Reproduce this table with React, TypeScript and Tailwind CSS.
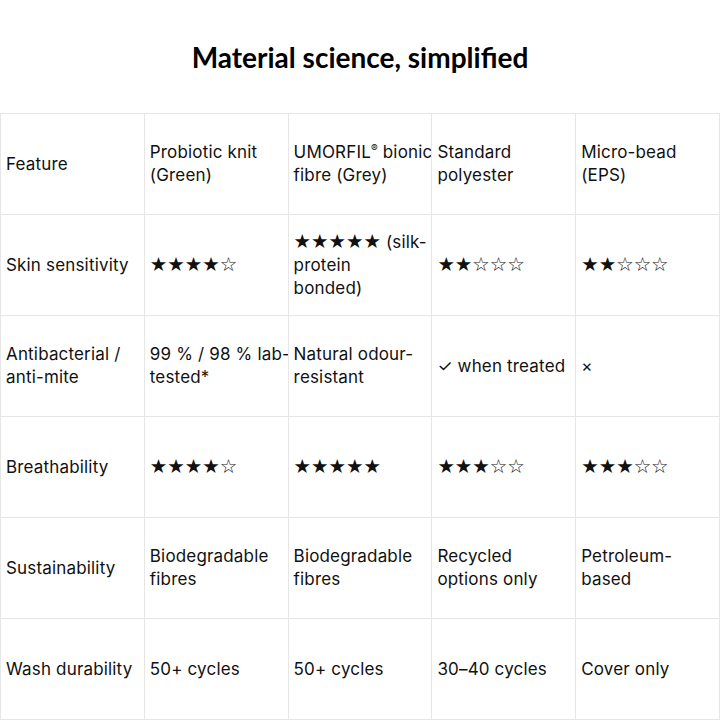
import type { ReactNode } from "react";

type Cell = ReactNode[] | { stars: number; extra?: string[] };

const headers: Cell[] = [
  ["Feature"],
  ["Probiotic knit", "(Green)"],
  [
    <>
      UMORFIL<sup className="text-[10px] relative -top-[6px]">®</sup> bionic
    </>,
    "fibre (Grey)",
  ],
  ["Standard", "polyester"],
  ["Micro-bead", "(EPS)"],
];

const rows: Cell[][] = [
  [
    ["Skin sensitivity"],
    { stars: 4 },
    { stars: 5, extra: [" (silk-", "protein", "bonded)"] },
    { stars: 2 },
    { stars: 2 },
  ],
  [
    ["Antibacterial /", "anti-mite"],
    ["99 % / 98 % lab-", "tested*"],
    ["Natural odour-", "resistant"],
    ["✓ when treated"],
    ["×"],
  ],
  [["Breathability"], { stars: 4 }, { stars: 5 }, { stars: 3 }, { stars: 3 }],
  [
    ["Sustainability"],
    ["Biodegradable", "fibres"],
    ["Biodegradable", "fibres"],
    ["Recycled", "options only"],
    ["Petroleum-", "based"],
  ],
  [["Wash durability"], ["50+ cycles"], ["50+ cycles"], ["30–40 cycles"], ["Cover only"]],
];

const Stars = ({ n }: { n: number }) => (
  <span className="font-['DejaVu_Sans',sans-serif] text-[19.5px] tracking-normal">
    {"★★★★★".slice(0, n)}
    {"☆☆☆☆☆".slice(0, 5 - n)}
  </span>
);

const CellBody = ({ cell }: { cell: Cell }) => {
  if (Array.isArray(cell)) {
    return (
      <>
        {cell.map((line, i) => (
          <div key={i}>{line}</div>
        ))}
      </>
    );
  }
  if (!cell.extra) return <div><Stars n={cell.stars} /></div>;
  return (
    <>
      <div>
        <Stars n={cell.stars} />
        {cell.extra[0]}
      </div>
      {cell.extra.slice(1).map((line, i) => (
        <div key={i}>{line}</div>
      ))}
    </>
  );
};

const cellCls =
  "h-[101px] flex flex-col justify-center px-[5px] whitespace-nowrap overflow-hidden border-r border-b border-[#e6e6e6]";

export default function App() {
  return (
    <div className="w-[720px] h-[720px] overflow-hidden bg-white text-[#111] font-['Inter',sans-serif]">
      <div className="h-[113px] flex items-center justify-center">
        <h1 className="font-['Lato',sans-serif] font-bold text-[28px] text-black">
          Material science, simplified
        </h1>
      </div>
      <div className="grid grid-cols-5 border-t border-l border-[#e6e6e6] text-[17px] leading-[23px] tracking-[0.01em]">
        {headers.map((h, i) => (
          <div key={i} className={cellCls}>
            <CellBody cell={h} />
          </div>
        ))}
        {rows.map((r, ri) =>
          r.map((c, ci) => (
            <div key={ri + "-" + ci} className={cellCls}>
              <CellBody cell={c} />
            </div>
          ))
        )}
      </div>
    </div>
  );
}
